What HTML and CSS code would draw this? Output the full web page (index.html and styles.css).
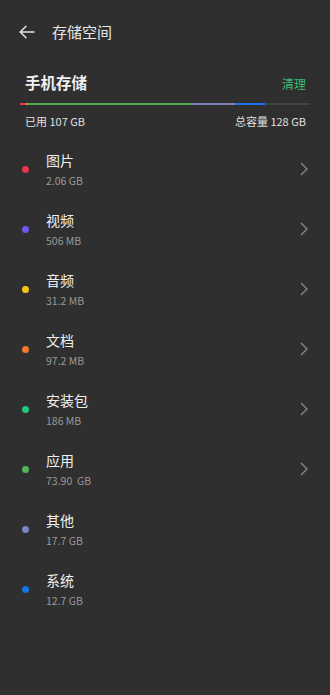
FILE: index.html
```html
<!DOCTYPE html>
<html lang="zh">
<head>
<meta charset="utf-8">
<link rel="stylesheet" href="styles.css">
</head>
<body>
<div class="page">
  <header class="topbar">
    <svg class="back" width="16" height="14" viewBox="0 0 16 14"><path d="M15 7H1.5M7 1.2L1.2 7L7 12.8" fill="none" stroke="#e6e6e6" stroke-width="1.5" stroke-linecap="round" stroke-linejoin="round"/></svg>
    <span class="title">存储空间</span>
  </header>
  <section class="summary">
    <div class="summary-head">
      <span class="summary-title">手机存储</span>
      <span class="clean">清理</span>
    </div>
    <div class="bar">
      <span class="seg" style="width:6px;background:#e8364a"></span>
      <span class="seg" style="width:1px;background:#f0a030"></span>
      <span class="seg" style="width:164px;background:#4cb050"></span>
      <span class="seg" style="width:44px;background:#7d82b8"></span>
      <span class="seg" style="width:30px;background:#1a72e8"></span>
    </div>
    <div class="summary-foot">
      <span>已用 107 GB</span>
      <span>总容量 128 GB</span>
    </div>
  </section>
  <ul class="list">
    <li class="row"><span class="dot" style="background:#e8364a"></span><div class="info"><div class="name">图片</div><div class="size">2.06 GB</div></div><svg class="chev" width="8" height="14" viewBox="0 0 8 14"><path d="M1 1L7 7L1 13" fill="none" stroke="#8a8a8a" stroke-width="1.3"/></svg></li>
    <li class="row"><span class="dot" style="background:#7656f0"></span><div class="info"><div class="name">视频</div><div class="size">506 MB</div></div><svg class="chev" width="8" height="14" viewBox="0 0 8 14"><path d="M1 1L7 7L1 13" fill="none" stroke="#8a8a8a" stroke-width="1.3"/></svg></li>
    <li class="row"><span class="dot" style="background:#f5c518"></span><div class="info"><div class="name">音频</div><div class="size">31.2 MB</div></div><svg class="chev" width="8" height="14" viewBox="0 0 8 14"><path d="M1 1L7 7L1 13" fill="none" stroke="#8a8a8a" stroke-width="1.3"/></svg></li>
    <li class="row"><span class="dot" style="background:#f07830"></span><div class="info"><div class="name">文档</div><div class="size">97.2 MB</div></div><svg class="chev" width="8" height="14" viewBox="0 0 8 14"><path d="M1 1L7 7L1 13" fill="none" stroke="#8a8a8a" stroke-width="1.3"/></svg></li>
    <li class="row"><span class="dot" style="background:#25c87a"></span><div class="info"><div class="name">安装包</div><div class="size">186 MB</div></div><svg class="chev" width="8" height="14" viewBox="0 0 8 14"><path d="M1 1L7 7L1 13" fill="none" stroke="#8a8a8a" stroke-width="1.3"/></svg></li>
    <li class="row"><span class="dot" style="background:#4cb858"></span><div class="info"><div class="name">应用</div><div class="size">73.90&nbsp; GB</div></div><svg class="chev" width="8" height="14" viewBox="0 0 8 14"><path d="M1 1L7 7L1 13" fill="none" stroke="#8a8a8a" stroke-width="1.3"/></svg></li>
    <li class="row"><span class="dot" style="background:#7a88c0"></span><div class="info"><div class="name">其他</div><div class="size">17.7 GB</div></div></li>
    <li class="row"><span class="dot" style="background:#1a72e8"></span><div class="info"><div class="name">系统</div><div class="size">12.7 GB</div></div></li>
  </ul>
</div>
</body>
</html>
```

FILE: styles.css
```css
* { box-sizing: border-box; }
html, body {
  margin: 0;
  padding: 0;
  background: #2f2f2f;
}
body {
  font-family: "Noto Sans CJK SC", "Noto Sans", Roboto, sans-serif;
  color: #ececec;
  width: 330px;
  height: 695px;
  overflow: hidden;
}
.page { display: flex; flex-direction: column; }
.topbar {
  height: 64px;
  display: flex;
  align-items: center;
  padding-left: 19px;
  gap: 17px;
}
.back { display: block; }
.title {
  font-size: 15px;
  line-height: 20px;
  color: #e8e8e8;
}
.summary {
  padding: 6px 20px 0 20px;
  display: flex;
  flex-direction: column;
}
.summary-head {
  height: 24px;
  display: flex;
  justify-content: space-between;
  align-items: center;
  padding: 0 4px 0 5px;
}
.summary-title {
  font-size: 15.5px;
  font-weight: 700;
  color: #f0f0f0;
}
.clean {
  font-size: 12px;
  color: #3cbc78;
  padding-top: 2px;
}
.bar {
  margin-top: 9px;
  height: 2px;
  background: #444444;
  display: flex;
}
.seg { display: block; height: 2px; }
.summary-foot {
  margin-top: 8px;
  height: 16px;
  display: flex;
  justify-content: space-between;
  align-items: center;
  padding: 0 4px 0 5px;
  font-size: 11px;
  color: #e0e0e0;
}
.list {
  list-style: none;
  margin: 11px 0 0 0;
  padding: 0;
}
.row {
  height: 60px;
  display: flex;
  align-items: flex-start;
  padding-left: 22px;
  padding-right: 22px;
}
.dot {
  width: 7px;
  height: 7px;
  border-radius: 50%;
  margin-top: 26px;
  flex: none;
}
.info {
  margin-left: 17px;
  padding-top: 10px;
  flex: 1;
}
.name {
  font-size: 14px;
  line-height: 20px;
  color: #f0f0f0;
}
.size {
  margin-top: 3px;
  font-size: 10.5px;
  line-height: 16px;
  color: #999999;
}
.chev {
  margin-top: 22px;
  flex: none;
}
```
